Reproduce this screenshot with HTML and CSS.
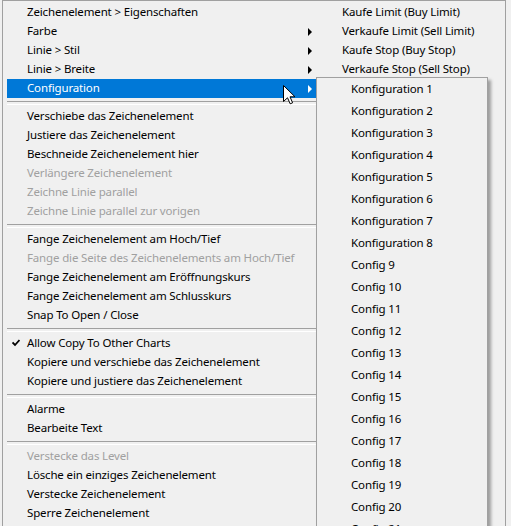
FILE: index.html
```html
<!DOCTYPE html>
<html lang="de">
<head>
  <meta charset="UTF-8" />
  <title>Zeichenelement Kontextmenü</title>
  <link rel="stylesheet" href="styles.css">
</head>
<body>

  <div class="menu">
    <!-- erste Spalte: Zeichenelement-Befehle -->
    <div class="column main-col">
      <div class="item">Zeichenelement &gt; Eigenschaften</div>
      <div class="item">Farbe<span class="arrow"></span></div>
      <div class="item">Linie &gt; Stil<span class="arrow"></span></div>
      <div class="item">Linie &gt; Breite<span class="arrow"></span></div>
      <div class="item active">Configuration<span class="arrow"></span></div>
      <div class="sep"></div>
      <div class="item">Verschiebe das Zeichenelement</div>
      <div class="item">Justiere das Zeichenelement</div>
      <div class="item">Beschneide Zeichenelement hier</div>
      <div class="item disabled">Verlängere Zeichenelement</div>
      <div class="item disabled">Zeichne Linie parallel</div>
      <div class="item disabled">Zeichne Linie parallel zur vorigen</div>
      <div class="sep"></div>
      <div class="item">Fange Zeichenelement am Hoch/Tief</div>
      <div class="item disabled">Fange die Seite des Zeichenelements am Hoch/Tief</div>
      <div class="item">Fange Zeichenelement am Eröffnungskurs</div>
      <div class="item">Fange Zeichenelement am Schlusskurs</div>
      <div class="item">Snap To Open / Close</div>
      <div class="sep"></div>
      <div class="item checked">
        <svg class="check" width="8" height="8" viewBox="0 0 8 8"><path d="M0.5 3.5 L3 6 L7.5 1" fill="none" stroke="#000" stroke-width="1.8"/></svg>
        Allow Copy To Other Charts
      </div>
      <div class="item">Kopiere und verschiebe das Zeichenelement</div>
      <div class="item">Kopiere und justiere das Zeichenelement</div>
      <div class="sep"></div>
      <div class="item">Alarme</div>
      <div class="item">Bearbeite Text</div>
      <div class="sep"></div>
      <div class="item disabled">Verstecke das Level</div>
      <div class="item">Lösche ein einziges Zeichenelement</div>
      <div class="item">Verstecke Zeichenelement</div>
      <div class="item">Sperre Zeichenelement</div>
    </div>

    <!-- zweite Spalte: Orderbefehle -->
    <div class="column order-col">
      <div class="item">Kaufe Limit (Buy Limit)</div>
      <div class="item">Verkaufe Limit (Sell Limit)</div>
      <div class="item">Kaufe Stop (Buy Stop)</div>
      <div class="item">Verkaufe Stop (Sell Stop)</div>
    </div>

    <!-- Untermenü von "Configuration" -->
    <div class="submenu" id="configMenu"></div>

    <!-- Mauszeiger -->
    <svg class="cursor" width="13" height="20" viewBox="0 0 13 20">
      <path d="M0.5 0.5 L0.5 16.5 L4.5 12.8 L7.2 18.8 L9.6 17.8 L7 11.8 L12 11.8 Z" fill="#fff" stroke="#000" stroke-width="1" stroke-linejoin="miter"/>
    </svg>
  </div>

  <script>
    // Einträge des Untermenüs erzeugen
    const configMenu = document.getElementById("configMenu");
    for (let i = 1; i <= 21; i++) {
      const row = document.createElement("div");
      row.className = "sub-item";
      row.textContent = i <= 8 ? "Konfiguration " + i : "Config " + i;
      configMenu.appendChild(row);
    }
  </script>
</body>
</html>
```

FILE: styles.css
```css
* {
  margin: 0;
  padding: 0;
  box-sizing: border-box;
}

html, body {
  height: 100%;
  overflow: hidden;
}

body {
  background: #f0f0f0;
  font-family: 'Noto Sans', 'Open Sans', sans-serif;
  font-size: 11.5px;
  letter-spacing: -0.15px;
  color: #000;
  padding-left: 2px;
}

.menu {
  position: relative;
  display: flex;
  width: 504px;
  background: #f0f0f0;
  border: 1px solid #a0a0a0;
  padding: 2px 0 3px 4px;
}

.column {
  display: flex;
  flex-direction: column;
}

.main-col {
  width: 318px;
}

.order-col {
  flex: 1;
}

.item {
  position: relative;
  display: flex;
  align-items: center;
  height: 19px;
  padding-left: 20px;
  padding-right: 13px;
  padding-bottom: 2px;
  white-space: nowrap;
}

.order-col .item {
  padding-left: 17px;
}

.item.active {
  background: #0078d7;
  color: #fff;
}

.item.disabled {
  color: #a0a0a0;
}

.check {
  position: absolute;
  left: 5px;
  top: 5px;
}

.arrow {
  margin-left: auto;
  margin-top: 2px;
  width: 0;
  height: 0;
  border-left: 4px solid #000;
  border-top: 4px solid transparent;
  border-bottom: 4px solid transparent;
}

.item.active .arrow {
  border-left-color: #fff;
}

.sep {
  height: 9px;
  display: flex;
  align-items: center;
}

.sep::before {
  content: "";
  display: block;
  width: 100%;
  height: 2px;
  border-top: 1px solid #a0a0a0;
  border-bottom: 1px solid #fff;
}

.submenu {
  position: absolute;
  left: 313px;
  top: 76px;
  width: 172px;
  background: #f0f0f0;
  border: 1px solid #a0a0a0;
  box-shadow: 3px 3px 3px rgba(0, 0, 0, 0.35);
}

.sub-item {
  height: 22px;
  display: flex;
  align-items: center;
  padding-left: 34px;
  padding-bottom: 2px;
  white-space: nowrap;
}

.cursor {
  position: absolute;
  left: 280px;
  top: 84px;
}
```
